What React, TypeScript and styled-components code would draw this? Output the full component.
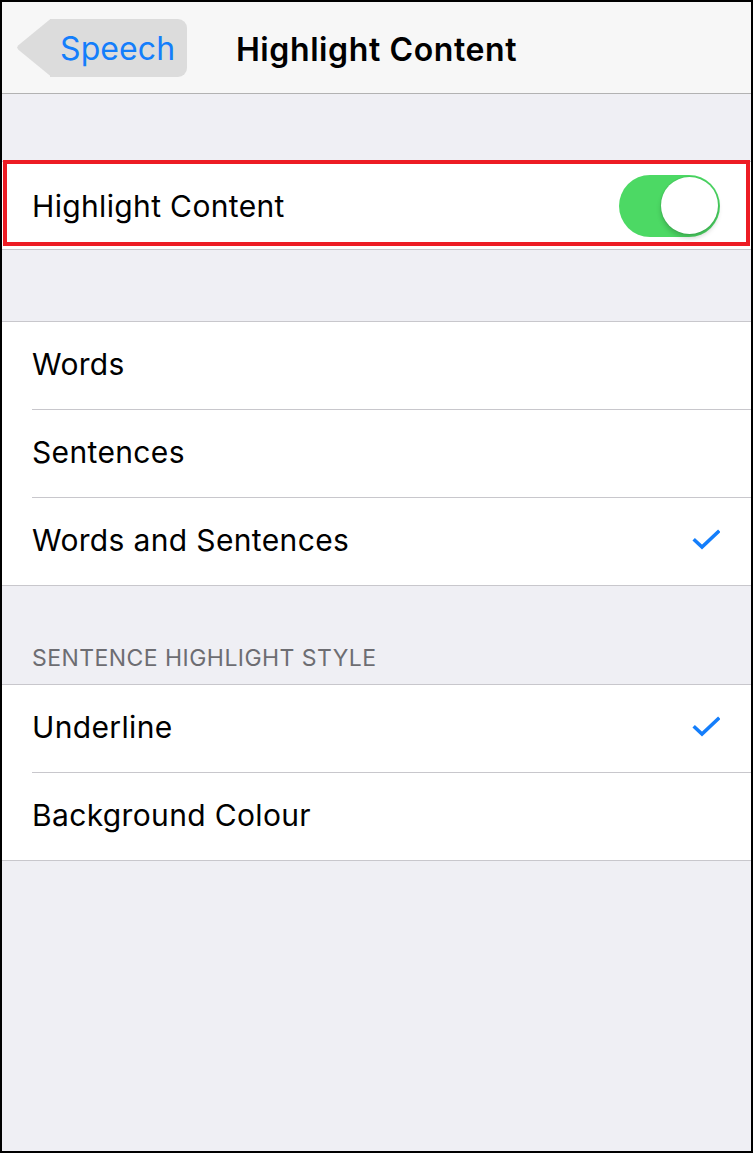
import styled, { createGlobalStyle } from "styled-components";

type Option = { label: string; selected?: boolean };

const highlightModes: Option[] = [
  { label: "Words" },
  { label: "Sentences" },
  { label: "Words and Sentences", selected: true },
];

const sentenceStyles: Option[] = [
  { label: "Underline", selected: true },
  { label: "Background Colour" },
];

const CheckMark = (): JSX.Element => (
  <svg width="28" height="22" viewBox="0 0 28 22" fill="none">
    <path
      d="M3 11.5 L10 18 L26 3"
      stroke="#147efb"
      strokeWidth="3.6"
      strokeLinecap="square"
      strokeLinejoin="miter"
    />
  </svg>
);

const OptionList = ({ options }: { options: Option[] }): JSX.Element => (
  <Group>
    {options.map((opt) => (
      <Row key={opt.label}>
        <Label>{opt.label}</Label>
        {opt.selected && <CheckMark />}
      </Row>
    ))}
  </Group>
);

const App = (): JSX.Element => {
  return (
    <>
      <GlobalStyle />
      <Frame>
        <NavBar>
          <NavSide>
            <BackButton>Speech</BackButton>
          </NavSide>
          <Title>Highlight Content</Title>
          <NavSide />
        </NavBar>

        <Spacer $height={67} />
        <Group>
          <Row $focused>
            <Label>Highlight Content</Label>
            <Switch $on>
              <Knob />
            </Switch>
          </Row>
        </Group>

        <Spacer $height={71} />
        <OptionList options={highlightModes} />

        <SectionHeader>Sentence Highlight Style</SectionHeader>
        <OptionList options={sentenceStyles} />
      </Frame>
    </>
  );
};

export default App;

const GlobalStyle = createGlobalStyle`
  body {
    margin: 0;
    font-family: "Inter", "Liberation Sans", sans-serif;
    -webkit-font-smoothing: antialiased;
  }
`;

const Frame = styled.div`
  width: 753px;
  height: 1153px;
  box-sizing: border-box;
  border: 2px solid #000;
  background: #efeff4;
  display: flex;
  flex-direction: column;
  overflow: hidden;
`;

const NavBar = styled.header`
  height: 92px;
  box-sizing: border-box;
  flex-shrink: 0;
  background: #f7f7f7;
  border-bottom: 1px solid #b2b2b2;
  display: grid;
  grid-template-columns: 1fr auto 1fr;
  align-items: center;
`;

const NavSide = styled.div`
  display: flex;
  align-items: center;
  padding-left: 48px;
`;

const BackButton = styled.button`
  position: relative;
  height: 58px;
  padding: 2px 12px 0 10px;
  border: 0;
  border-radius: 0 9px 9px 0;
  background: #dcdcdc;
  color: #147efb;
  font-family: "Inter", "Liberation Sans", sans-serif;
  font-size: 32px;
  font-weight: 400;
  letter-spacing: 0.1px;
  cursor: pointer;

  &::before {
    content: "";
    position: absolute;
    top: 0;
    left: -33px;
    width: 34px;
    height: 100%;
    background: #dcdcdc;
    clip-path: polygon(100% 0, 4% 46%, 0 50%, 4% 54%, 100% 100%);
  }
`;

const Title = styled.h1`
  margin: 3px 0 0;
  font-size: 32px;
  font-weight: 600;
  color: #000;
  letter-spacing: 0.6px;
`;

const Spacer = styled.div<{ $height: number }>`
  height: ${({ $height }) => $height}px;
  flex-shrink: 0;
`;

const Group = styled.section`
  flex-shrink: 0;
  background: #fff;
  border-top: 1px solid #c8c7cc;
  border-bottom: 1px solid #c8c7cc;
`;

const Row = styled.div<{ $focused?: boolean }>`
  position: relative;
  height: 88px;
  box-sizing: border-box;
  padding: 0 31px 4px 30px;
  display: flex;
  align-items: center;
  justify-content: space-between;

  &:last-child {
    height: 87px;
  }

  &:not(:last-child)::after {
    content: "";
    position: absolute;
    left: 30px;
    right: 0;
    bottom: 0;
    height: 1px;
    background: #c8c7cc;
  }

  ${({ $focused }) =>
    $focused &&
    `
    padding-bottom: 0;

    &::before {
      content: "";
      position: absolute;
      top: -2px;
      bottom: 3px;
      left: 1px;
      right: 1px;
      border: 4px solid #ed1c24;
      pointer-events: none;
    }
  `}
`;

const Label = styled.span`
  font-size: 30px;
  color: #000;
  letter-spacing: 0.35px;
`;

const Switch = styled.div<{ $on?: boolean }>`
  width: 101px;
  height: 62px;
  border-radius: 31px;
  background: ${({ $on }) => ($on ? "#4cd964" : "#e5e5ea")};
  display: flex;
  align-items: center;
  justify-content: ${({ $on }) => ($on ? "flex-end" : "flex-start")};
  padding: 0 2px;
  box-sizing: border-box;
`;

const Knob = styled.div`
  width: 57px;
  height: 57px;
  border-radius: 50%;
  background: #fff;
  box-shadow: 0 4px 5px rgba(0, 0, 0, 0.18), 0 0 0 1px rgba(0, 0, 0, 0.06);
`;

const SectionHeader = styled.h2`
  flex-shrink: 0;
  height: 98px;
  box-sizing: border-box;
  margin: 0;
  padding: 0 30px 12px;
  display: flex;
  align-items: flex-end;
  font-size: 23px;
  font-weight: 400;
  text-transform: uppercase;
  color: #6d6d72;
  letter-spacing: 0.45px;
`;
